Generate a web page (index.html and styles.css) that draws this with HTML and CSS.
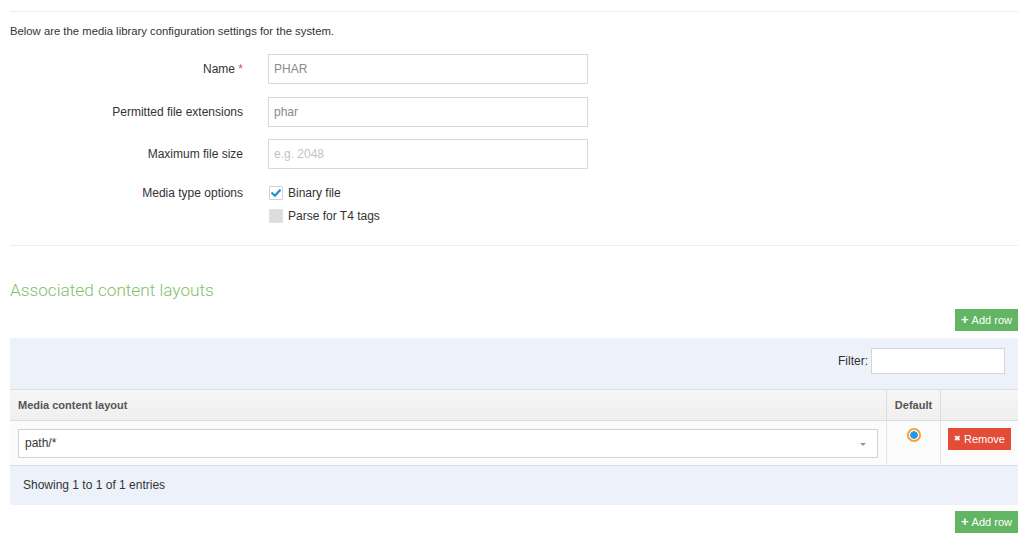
FILE: index.html
```html
<!DOCTYPE html>
<html>
<head>
<meta charset="utf-8">
<link rel="stylesheet" href="styles.css">
</head>
<body>
<div class="page">
  <div class="rule rule-top"></div>
  <p class="intro">Below are the media library configuration settings for the system.</p>
  <div class="form">
    <div class="form-row">
      <label class="form-label">Name <span class="req">*</span></label>
      <div class="input">PHAR</div>
    </div>
    <div class="form-row">
      <label class="form-label">Permitted file extensions</label>
      <div class="input">phar</div>
    </div>
    <div class="form-row">
      <label class="form-label">Maximum file size</label>
      <div class="input placeholder">e.g. 2048</div>
    </div>
    <div class="form-row form-row-checks">
      <label class="form-label">Media type options</label>
      <div class="checks">
        <div class="check"><span class="box checked"><svg viewBox="0 0 14 14" width="14" height="14"><path d="M3.2 7.2 L5.9 9.8 L10.9 4.2" fill="none" stroke="#1f8fd6" stroke-width="2.2" stroke-linecap="round" stroke-linejoin="round"/></svg></span>Binary file</div>
        <div class="check"><span class="box"></span>Parse for T4 tags</div>
      </div>
    </div>
  </div>
  <div class="rule rule-mid"></div>
  <h2 class="section-title">Associated content layouts</h2>
  <div class="actions actions-top"><span class="btn btn-add"><span class="plus">+</span>Add row</span></div>
  <div class="table-panel">
    <div class="filter-bar">
      <span class="filter-label">Filter:</span>
      <div class="filter-input"></div>
    </div>
    <div class="grid">
      <div class="th th-main">Media content layout</div>
      <div class="th th-default">Default</div>
      <div class="th th-act"></div>
      <div class="td td-main">
        <div class="select">path/*<span class="caret"></span></div>
      </div>
      <div class="td td-default"><span class="radio"></span></div>
      <div class="td td-act"><span class="btn btn-remove"><span class="x">&#x2716;</span>Remove</span></div>
    </div>
    <div class="info">Showing 1 to 1 of 1 entries</div>
  </div>
  <div class="actions actions-bottom"><span class="btn btn-add"><span class="plus">+</span>Add row</span></div>
</div>
</body>
</html>
```
FILE: styles.css
```css
html, body {
  margin: 0;
  padding: 0;
  background: #fff;
}
body {
  font-family: "Liberation Sans", Arial, sans-serif;
  color: #333;
  font-size: 12px;
}
.page {
  padding: 0 10px;
}
.rule {
  height: 1px;
  background: #eeeeee;
}
.rule-top {
  margin-top: 11px;
}
.intro {
  margin: 12px 0 0;
  font-size: 11.3px;
  line-height: 14px;
}
.form {
  margin-top: 16px;
  display: flex;
  flex-direction: column;
  gap: 12.5px;
}
.form-row {
  display: grid;
  grid-template-columns: 233px 320px;
  column-gap: 25px;
  align-items: center;
}
.form-label {
  text-align: right;
  font-size: 12px;
  color: #333;
}
.req {
  color: #d9534f;
}
.input {
  box-sizing: border-box;
  height: 30px;
  border: 1px solid #d8d8d8;
  padding: 0 5px;
  line-height: 28px;
  color: #8a8a8a;
  font-size: 12px;
}
.input.placeholder {
  color: #c4c4c4;
}
.form-row-checks {
  align-items: start;
}
.form-row-checks .form-label {
  line-height: 14px;
  margin-top: 4px;
}
.checks {
  display: flex;
  flex-direction: column;
  gap: 9px;
  padding-left: 1px;
  margin-top: 4px;
}
.check {
  display: flex;
  align-items: center;
  gap: 5px;
  line-height: 14px;
  color: #333;
}
.box {
  width: 14px;
  height: 14px;
  box-sizing: border-box;
  background: #dedede;
  border-radius: 1px;
  display: inline-block;
}
.box.checked {
  background: #fff;
  border: 1px solid #d2d2d2;
  position: relative;
}
.box.checked svg {
  position: absolute;
  left: -1px;
  top: -1px;
}
.rule-mid {
  margin-top: 22px;
}
.section-title {
  margin: 33px 0 0;
  font-family: "Roboto", "Liberation Sans", sans-serif;
  font-weight: 300;
  font-size: 17.2px;
  line-height: 22px;
  color: #7fc16b;
}
.actions {
  display: flex;
  justify-content: flex-end;
}
.actions-top {
  margin-top: 8px;
}
.actions-bottom {
  margin-top: 6px;
}
.btn {
  display: inline-flex;
  align-items: center;
  height: 22px;
  padding: 0 6px;
  color: #fff;
  font-size: 11px;
  box-sizing: border-box;
}
.btn-add {
  background: #62b562;
  width: 63px;
  justify-content: center;
}
.plus {
  font-weight: bold;
  font-size: 13px;
  margin-right: 3px;
}
.btn-remove {
  background: #e34c36;
  width: 63px;
  justify-content: center;
}
.x {
  font-size: 8px;
  margin-right: 3px;
}
.table-panel {
  margin-top: 7px;
  background: #edf2fa;
}
.filter-bar {
  display: flex;
  justify-content: flex-end;
  align-items: center;
  height: 51px;
  box-sizing: border-box;
  padding: 10px 13px 15px 0;
  gap: 3px;
}
.filter-label {
  font-size: 12px;
  color: #333;
}
.filter-input {
  width: 134px;
  height: 26px;
  box-sizing: border-box;
  background: #fff;
  border: 1px solid #d4d4d4;
}
.grid {
  display: grid;
  grid-template-columns: 1fr 54px 78px;
  background: #fff;
  border-top: 1px solid #dddddd;
  border-bottom: 1px solid #dddddd;
}
.th {
  height: 31px;
  box-sizing: border-box;
  background: linear-gradient(#f6f6f6, #efefef);
  border-bottom: 1px solid #dddddd;
  font-weight: bold;
  font-size: 11px;
  color: #555;
  line-height: 30px;
}
.th-main {
  padding-left: 8px;
}
.th-default {
  border-left: 1px solid #dddddd;
  text-align: center;
}
.th-act {
  border-left: 1px solid #dddddd;
}
.td {
  height: 44px;
  box-sizing: border-box;
  background: #fbfbfb;
}
.td-main {
  padding: 8px 8px 0 8px;
}
.td-default {
  border-left: 1px solid #e4e4e4;
  display: flex;
  justify-content: center;
  align-items: flex-start;
  padding-top: 7px;
}
.td-act {
  border-left: 1px solid #e4e4e4;
  display: flex;
  justify-content: center;
  align-items: flex-start;
  padding-top: 7px;
}
.select {
  position: relative;
  height: 29px;
  box-sizing: border-box;
  border: 1px solid #d2d2d2;
  background: #fff;
  padding-left: 6px;
  line-height: 27px;
  font-size: 12px;
  color: #333;
}
.caret {
  position: absolute;
  right: 11px;
  top: 13px;
  border-left: 3px solid transparent;
  border-right: 3px solid transparent;
  border-top: 3px solid #999;
}
.radio {
  width: 14px;
  height: 14px;
  box-sizing: border-box;
  border-radius: 50%;
  border: 2px solid #f2a23a;
  background: radial-gradient(circle, #1f9ce3 0 3.5px, #fff 4px);
}
.info {
  height: 39px;
  line-height: 39px;
  padding-left: 13px;
  font-size: 12px;
  color: #333;
}
```
